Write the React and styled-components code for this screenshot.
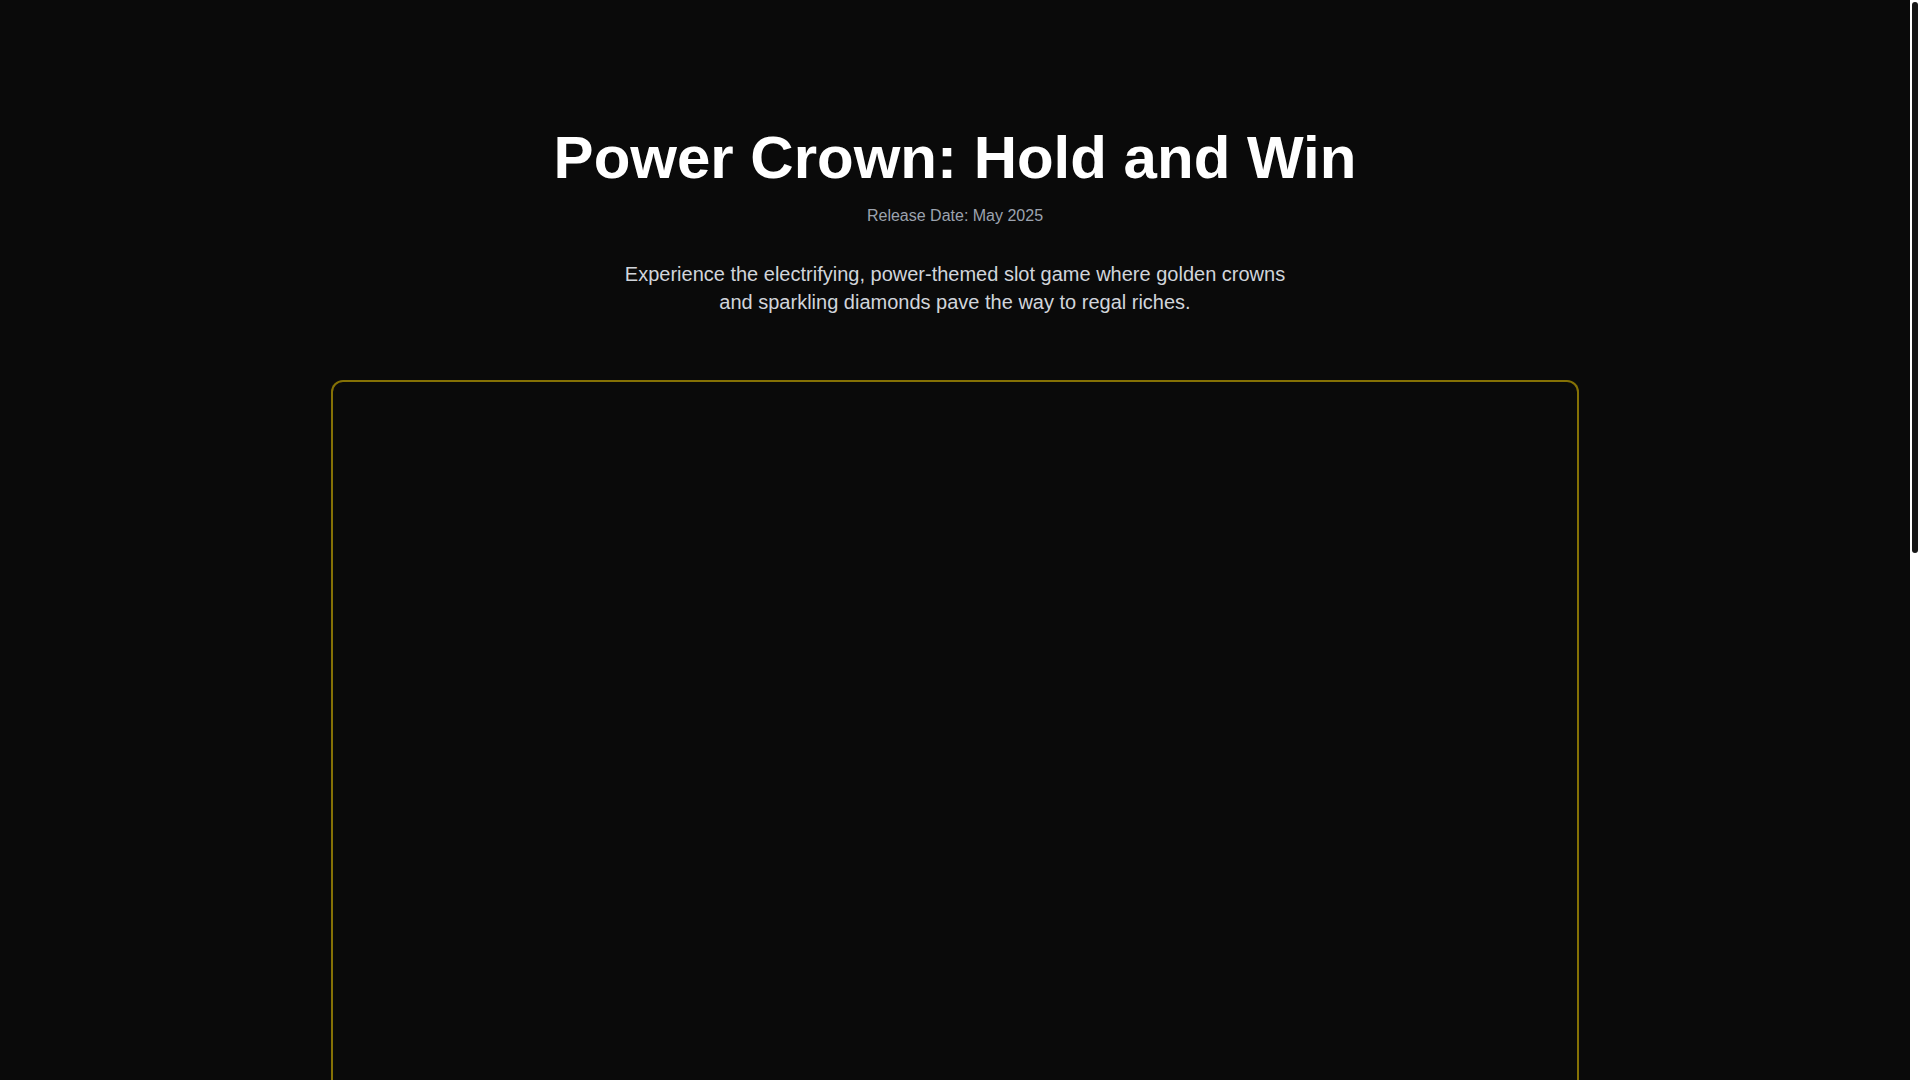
import React from "react";
import styled, { createGlobalStyle } from "styled-components";

const GlobalStyle = createGlobalStyle`
  html, body {
    margin: 0;
    padding: 0;
    background: #0a0a0a;
    font-family: "Liberation Sans", Arial, sans-serif;
  }
  * {
    box-sizing: border-box;
  }
`;

const Page = styled.main`
  margin-right: 10px;
  color: #ffffff;
  background: #0a0a0a;
  padding: 128px 0 64px;
`;

const Container = styled.div`
  max-width: 1280px;
  margin: 0 auto;
  padding: 0 16px;
`;

const Hero = styled.header`
  text-align: center;
  margin-bottom: 64px;

  h1 {
    margin: 0 0 16px;
    font-size: 60px;
    line-height: 1;
    font-weight: 700;
    color: #ffffff;
  }

  .release {
    margin: 0 0 32px;
    font-size: 16px;
    line-height: 24px;
    color: #9ca3af;
  }

  .intro {
    max-width: 672px;
    margin: 0 auto;
    font-size: 20px;
    line-height: 28px;
    color: #d1d5db;
  }
`;

const GameFrame = styled.section`
  height: 1672px;
  border: 2px solid rgba(255, 215, 0, 0.5);
  border-radius: 12px;
  background: #0a0a0a;
  overflow: hidden;
`;

/* page scrollbar, drawn over the right edge */
const ScrollTrack = styled.div`
  position: fixed;
  top: 0;
  right: 0;
  width: 10px;
  height: 100vh;
  background: #ffffff;
  padding: 2px 2px 0;
`;

const ScrollThumb = styled.div`
  width: 6px;
  height: ${(p) => p.$size}px;
  background: #161616;
  border-radius: 3px;
`;

const App = () => {
  return (
    <>
      <GlobalStyle />
      <Page>
        <Container>
          <Hero>
            <h1>Power Crown: Hold and Win</h1>
            <p className="release">Release Date: May 2025</p>
            <p className="intro">
              Experience the electrifying, power-themed slot game where golden
              crowns and sparkling diamonds pave the way to regal riches.
            </p>
          </Hero>

          <GameFrame />
        </Container>
      </Page>
      <ScrollTrack>
        <ScrollThumb $size={551} />
      </ScrollTrack>
    </>
  );
};

export default App;
